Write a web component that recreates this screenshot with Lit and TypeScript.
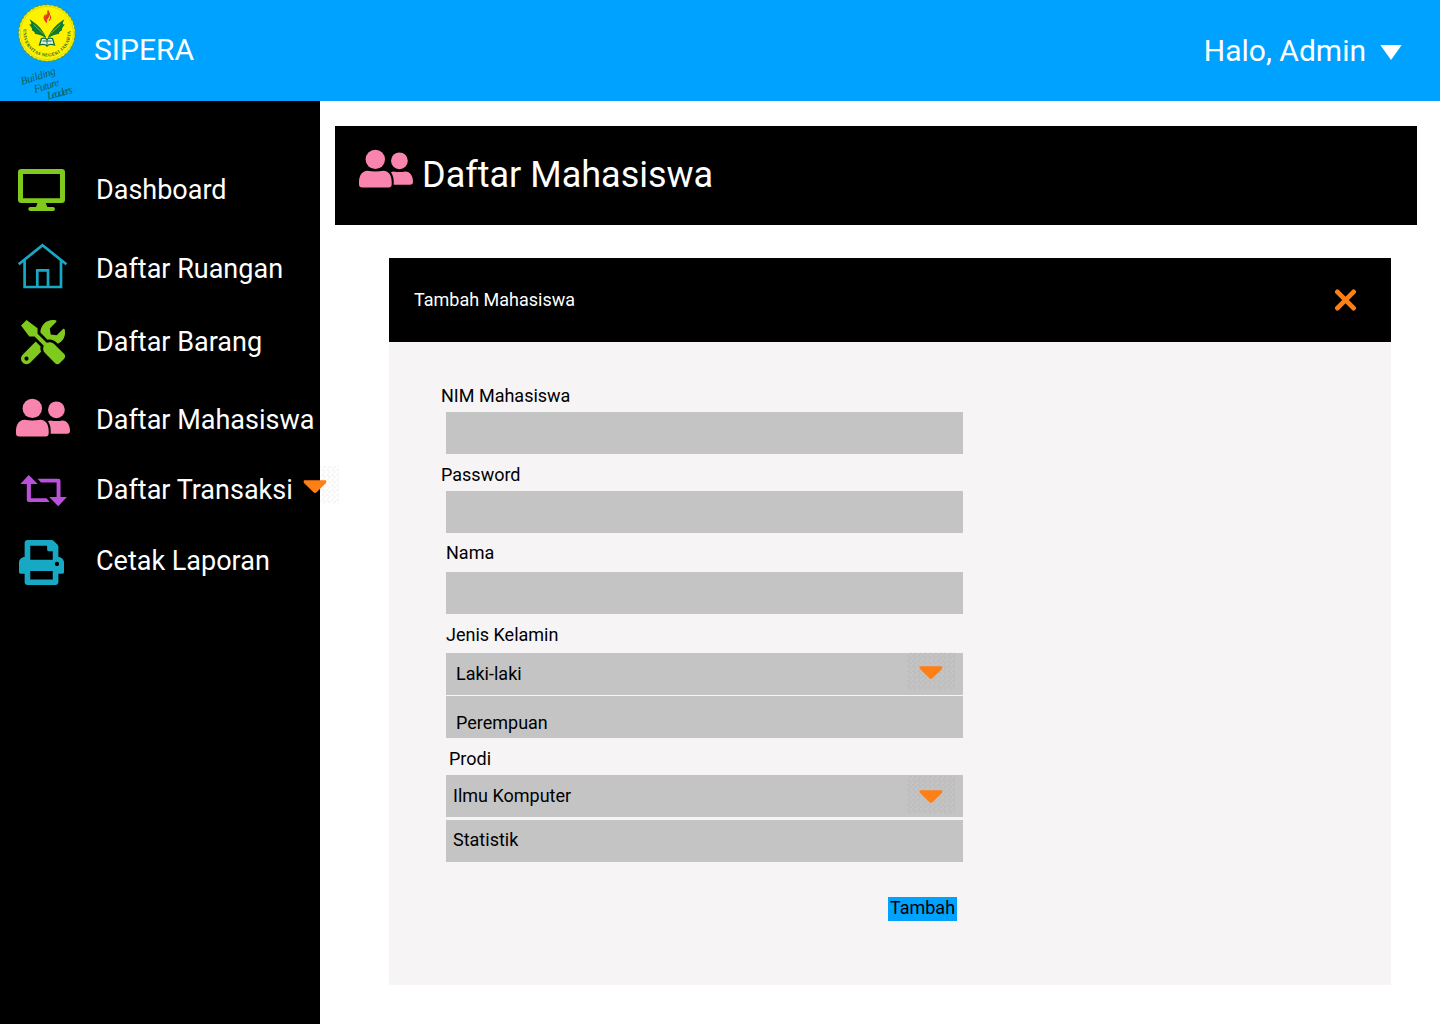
import { LitElement, html, css, svg } from "lit";
import { customElement } from "lit/decorators.js";

const people = svg`
  <circle cx="32.3" cy="408.4" r="9.7"/>
  <circle cx="56.4" cy="409.8" r="8.4"/>
  <path d="M24.500 419.800Q32.500 421.400 40.500 419.800C46 419.800 48.700 425 48.700 431V433.200Q48.700 436.500 45.500 436.500H19.200Q16 436.500 16 433.200V431C16 425 19 419.800 24.500 419.800Z"/>
  <path d="M48 421.300Q49.300 420.400 50.500 420.400Q56.500 421.700 62.500 420.400C67 420.400 70 425 70 430.500Q70 433.700 67 433.700H50.700Q51.200 426 48 421.300Z"/>`;

const icons = {
  monitor: svg`<svg class="icon green" viewBox="14 160 58 60">
    <path fill-rule="evenodd" d="M21.500 169H61.700Q65 169 65 172.300V199.800Q65 203 61.700 203H45.800L47.300 207H53Q55 207 55 209T53 211H30.300Q28.300 211 28.300 209T30.300 207H36L37.500 203H21.500Q18 203 18 199.800V172.300Q18 169 21.500 169ZM23 174V198.200H60V174Z"/></svg>`,
  house: svg`<svg class="icon teal-line" viewBox="14 239 58 60">
    <path d="M18.700 264.300L42.500 245.300L66.400 264.300M24.600 260V287H61V260M37.300 287V270.300H48V287"/></svg>`,
  tools: svg`<svg class="icon green" viewBox="14 312 58 60">
    <path transform="translate(21 320) scale(.0862)" d="M501.1 395.7L384 278.6c-23.1-23.1-57.6-27.6-85.4-13.9L192 158.100V96L64 0 0 64l96 128h62.100l106.600 106.600c-13.600 27.800-9.200 62.300 13.900 85.400l117.100 117.100c14.600 14.600 38.200 14.600 52.700 0l52.700-52.700c14.500-14.600 14.500-38.200 0-52.700zM331.700 225c28.300 0 54.900 11 74.900 31l19.400 19.400c15.800-6.900 30.800-16.500 43.800-29.500 37.100-37.100 49.700-89.300 37.900-136.700-2.200-9-13.500-12.100-20.100-5.500l-74.400 74.400-67.900-11.300L334 98.900l74.400-74.400c6.600-6.600 3.400-17.900-5.700-20.200-47.400-11.700-99.600.9-136.600 37.900-28.500 28.500-41.900 66.100-41.200 103.600l82.100 82.100c8.100-1.900 16.500-2.900 24.700-2.900zm-103.900 82l-56.700-56.700L18.700 402.800c-25 25-25 65.500 0 90.500s65.500 25 90.500 0l123.600-123.600c-7.600-19.900-9.900-41.600-5-62.700zM64 472c-13.200 0-24-10.800-24-24 0-13.300 10.700-24 24-24s24 10.700 24 24c0 13.200-10.700 24-24 24z"/></svg>`,
  people: svg`<svg class="icon pink" viewBox="14 390 58 60">${people}</svg>`,
  exchange: svg`<svg class="icon purple" viewBox="14 460 58 60">
    <path d="M28.800 475L37.700 484H30.900V498.300H46.500L49.800 502.100H28.800Q26.800 502.100 26.800 500.300V484H20.300ZM37.500 478.800H58.300Q60.500 478.800 60.500 480.800V497H66.900L58.200 506.200L49.200 497H56.600V482.600H41Z"/></svg>`,
  printer: svg`<svg class="icon teal" viewBox="14 531 58 60">
    <path transform="translate(19 540) scale(.0879)" d="M448 192V77.250c0-8.490-3.370-16.620-9.370-22.630L393.370 9.370c-6-6-14.140-9.370-22.630-9.370H96C78.330 0 64 14.330 64 32v160c-35.350 0-64 28.650-64 64v112c0 8.840 7.160 16 16 16h48v96c0 17.670 14.330 32 32 32h320c17.670 0 32-14.330 32-32v-96h48c8.840 0 16-7.160 16-16V256c0-35.350-28.650-64-64-64zm-64 256H128v-96h256v96zm0-224H128V64h192v48c0 8.840 7.160 16 16 16h48v96zm48 72c-13.250 0-24-10.750-24-24 0-13.260 10.750-24 24-24s24 10.740 24 24c0 13.250-10.750 24-24 24z"/></svg>`,
};

const caret = html`<span class="caret"><svg width="24" height="14" viewBox="0 0 24 14">
  <path d="M1 .3H23Q24 2 22.800 3.300L13.500 12.300Q12 13.800 10.500 12.300L1.200 3.300Q0 2 1 .3Z"/></svg></span>`;

const logo = svg`<svg class="logo" width="72" height="101" viewBox="10 0 72 101">
  <circle cx="46.900" cy="33" r="28.300" fill="#fff200"/>
  <circle cx="46.900" cy="33" r="28.300" fill="none" stroke="#5f9d3a" stroke-width="1.200" stroke-dasharray="3 1.500"/>
  <circle cx="46.900" cy="33" r="26.500" fill="none" stroke="#c8cf25" stroke-width=".7"/>
  <path d="M46.500 22.500Q43 20 45.500 16.500Q48.500 13.500 48 10.500Q51 14 48.500 17Q46 19.500 46.500 22.500ZM44.500 20Q43 17 45.500 14.500M49 21Q51.500 18.500 50.500 15.500" fill="#e33b1e" stroke="#e33b1e" stroke-width="1"/>
  <g transform="translate(47 0) scale(1.16 1) translate(-47 0)">
    <path d="M45.800 37.500Q42 27 33 20.500Q35 25 32.500 25Q35 28.500 34.500 30Q37.500 31.500 37 33.500Q43 34.500 45.800 37.500ZM48.200 37.500Q52 27 61 20.500Q59 25 61.500 25Q59 28.500 59.500 30Q56.500 31.500 57 33.500Q51 34.500 48.200 37.500Z" fill="#0a7a35" stroke="#0a7a35" stroke-width=".9"/>
    <path d="M35.500 24.500L44 34M58.500 24.500L50 34" stroke="#fff200" stroke-width=".5"/>
  </g>
  <path d="M41.500 38.500Q45 37.500 47 39.500Q49 37.500 52.500 38.500L54.500 45Q49.500 43.500 47 46Q44.500 43.500 39.500 45Z" fill="#dff0df" stroke="#0a6a45" stroke-width="1.300"/>
  <path d="M47 39.500V46M42.500 41H51.500" stroke="#0a6a45" stroke-width=".9"/>
  <path id="ring" d="M23.500 29A23.700 23.700 0 1 0 70.300 29" fill="none"/>
  <text class="ring" textLength="80" lengthAdjust="spacing"><textPath href="#ring">UNIVERSITAS NEGERI JAKARTA</textPath></text>
  <g class="motto">
    <text transform="translate(22 85) rotate(-18)" textLength="36">Building</text>
    <text transform="translate(35 93) rotate(-17)" textLength="26">Future</text>
    <text transform="translate(48 99.500) rotate(-15)" textLength="26">Leaders</text>
  </g></svg>`;

const menu = [
  { id: "dashboard", label: "Dashboard", icon: icons.monitor },
  { id: "ruangan", label: "Daftar Ruangan", icon: icons.house },
  { id: "barang", label: "Daftar Barang", icon: icons.tools },
  { id: "mahasiswa", label: "Daftar Mahasiswa", icon: icons.people },
  { id: "transaksi", label: "Daftar Transaksi", icon: icons.exchange, more: true },
  { id: "laporan", label: "Cetak Laporan", icon: icons.printer },
];

@customElement("app-root")
export class AppRoot extends LitElement {
  static styles = css`
    :host { display: flex; flex-direction: column; width: 1440px; height: 1024px; overflow: hidden;
      background: #fff; font-family: Roboto, sans-serif; color: #000; }
    * { box-sizing: border-box; }
    svg { display: block; flex: none; }
    header { height: 101px; flex: none; background: #00a2ff; color: #fff; display: flex; padding: 0 38.500px 0 10px; }
    .logo { overflow: visible; }
    .brand { font-size: 30px; line-height: 40px; padding-top: 30px; margin-left: 12px; }
    .user { margin-left: auto; display: flex; font-size: 30px; line-height: 40px; padding-top: 31px; }
    .user svg { margin: 14px 0 0 13.500px; fill: #fff; }
    .body { flex: 1; display: flex; min-height: 0; }
    nav { width: 320px; flex: none; background: #000; color: #fff; padding: 59px 0 0 14px; }
    .item { display: flex; height: 60px; line-height: 60px; font-size: 27px; white-space: nowrap; position: relative; }
    .icon { width: 58px; height: 60px; margin-right: 24px; }
    .ruangan { margin-top: 19px; }
    .barang { margin-top: 13px; }
    .mahasiswa { margin-top: 18px; }
    .transaksi { margin-top: 10px; }
    .laporan { margin-top: 11px; }
    .green { fill: #80ca1e; }
    .teal { fill: #17a9c4; }
    .teal-line { fill: none; stroke: #17a9c4; stroke-width: 2.7; }
    .pink { fill: #f984ad; }
    .purple { fill: #bd4fdd; }
    .caret { display: flex; justify-content: center; width: 48px; height: 38px; padding-top: 13.500px;
      background: repeating-conic-gradient(rgba(0,0,0,.03) 0 25%, transparent 0 50%) 0 0 / 5px 5px; }
    .caret svg { fill: #ff7f17; }
    .item .caret { position: absolute; left: 277px; top: 6px; }
    main { flex: 1; padding: 25px 23px 0 15px; }
    .title { height: 99px; background: #000; color: #fff; display: flex; font-size: 36px; line-height: 99px; }
    .title .icon { margin: 12px 7px 0 22px; }
    h1, h2 { margin: 0; font: inherit; }
    .card { margin: 33px 26px 0 54px; height: 727px; background: #f6f4f5; font-size: 18px; }
    .card-head { height: 84px; background: #000; color: #fff; line-height: 84px; padding: 0 34px 0 25px;
      display: flex; justify-content: space-between; align-items: center; }
    form { width: 574px; padding: 44px 0 0 57px; display: flex; flex-direction: column; line-height: 20px; }
    .label { height: 20px; }
    .out { margin-left: -5px; }
    .in { margin-left: 3px; }
    .field { height: 42px; background: #c4c4c4; margin: 6px 0 11px; display: flex; justify-content: space-between; padding-right: 8px; }
    .wide { margin-top: 9px; }
    .short { margin-bottom: 10px; }
    .gender { margin: 8px 0 1px; padding-left: 10px; line-height: 42px; }
    .gender2 { margin: 0 0 11px; padding-left: 10px; line-height: 54px; }
    .prodi { margin: 6px 0 3px; padding-left: 7px; line-height: 42px; }
    .prodi .caret { margin-top: 1px; }
    .prodi2 { margin: 0 0 35px; padding-left: 7px; line-height: 40px; }
    .gender .caret { margin-top: -1px; }
    button { align-self: flex-end; width: 69px; height: 24px; margin-right: 6px; border: 0; padding: 0 0 2px; background: #00a2ff;
      font: 18px/22px Roboto, sans-serif; color: #000; white-space: nowrap; }
    .ring { font: 700 4.600px "Liberation Serif", serif; fill: #17622f; }
    .motto { font: italic 11px "Liberation Serif", serif; fill: #0b5f5a; }
  `;

  render() {
    return html`
      <header>
        ${logo}
        <div class="brand">SIPERA</div>
        <div class="user"><span>Halo, Admin</span>
          <svg width="22" height="15" viewBox="0 0 22 15"><path d="M.3 0H21.700L11 15Z"/></svg></div>
      </header>
      <div class="body">
        <nav>${menu.map((m) => html`<div class="item ${m.id}">${m.icon}<span>${m.label}</span>${m.more ? caret : ""}</div>`)}</nav>
        <main>
          <div class="title"><svg class="icon pink" viewBox="14 387 58 60">${people}</svg><h1>Daftar Mahasiswa</h1></div>
          <section class="card">
            <div class="card-head"><h2>Tambah Mahasiswa</h2>
              <svg width="23" height="22" viewBox="0 0 23 22"><path d="M3.400 2.900L19.600 19.100M19.600 2.900L3.400 19.100" stroke="#ff7f17" stroke-width="4.800" stroke-linecap="round"/></svg></div>
            <form>
              <div class="label out">NIM Mahasiswa</div><div class="field"></div>
              <div class="label out">Password</div><div class="field short"></div>
              <div class="label">Nama</div><div class="field wide"></div>
              <div class="label">Jenis Kelamin</div>
              <div class="field gender"><span>Laki-laki</span>${caret}</div>
              <div class="field gender2">Perempuan</div>
              <div class="label in">Prodi</div>
              <div class="field prodi"><span>Ilmu Komputer</span>${caret}</div>
              <div class="field prodi2">Statistik</div>
              <button type="button">Tambah</button>
            </form>
          </section>
        </main>
      </div>`;
  }
}
